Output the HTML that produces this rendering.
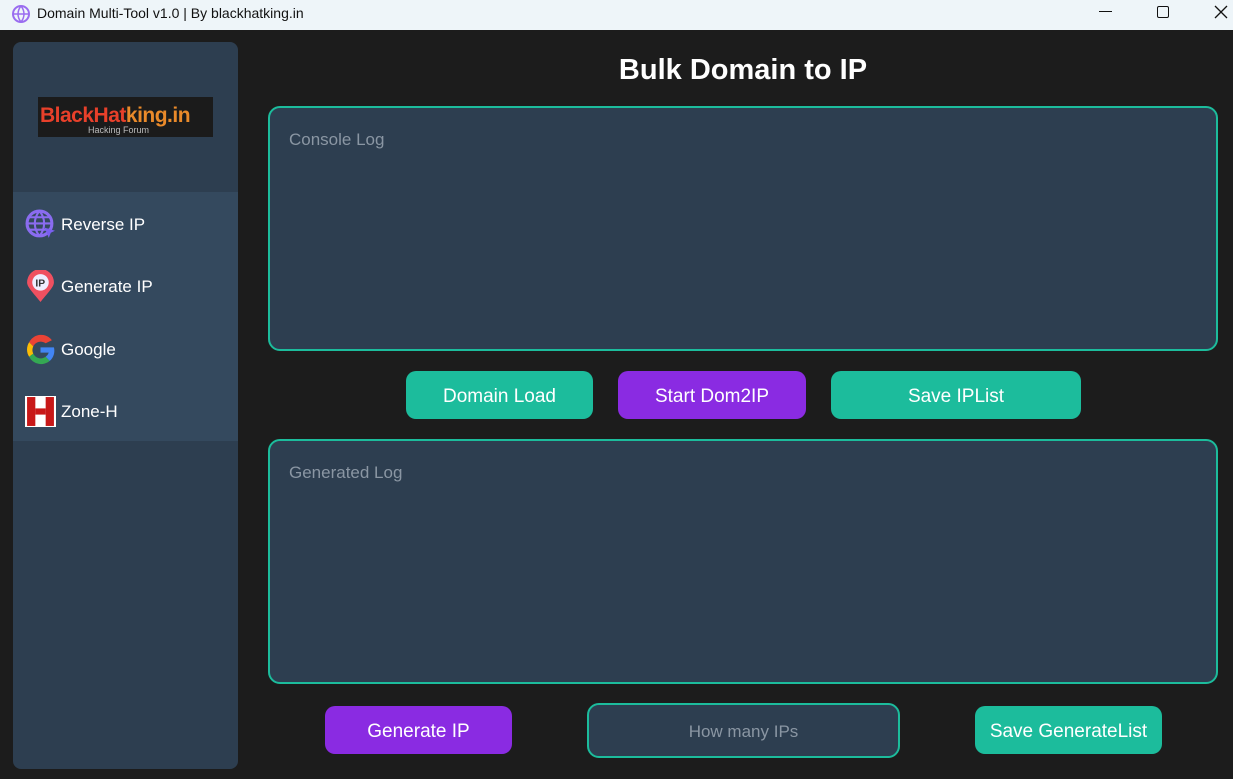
<!DOCTYPE html>
<html><head><style>
body{margin:0;width:1233px;height:779px;background:#1c1c1c;font-family:"Liberation Sans",sans-serif;position:relative;overflow:hidden}
.a{position:absolute}
.tb{left:0;top:0;width:1233px;height:30px;background:#eef5f9}
.btn{position:absolute;border-radius:10px;color:#fff;font-size:19px;display:flex;align-items:center;justify-content:center;padding-top:4px;box-sizing:border-box}
.t{background:#1cbc9c}.p{background:#8a2be2}
.box{position:absolute;border:2px solid #1cbc9c;border-radius:12px;background:#2d3e50;box-sizing:border-box}
.ph{position:absolute;left:19px;top:22px;color:#8a96a3;font-size:17px}
.nav{position:absolute;left:25px;color:#fff;font-size:17px;display:flex;align-items:center;gap:5px}
</style></head><body>
<div class="a tb"></div>
<svg class="a" style="left:11px;top:4px" width="22" height="22" viewBox="0 0 22 22"><circle cx="10" cy="10" r="8" fill="none" stroke="#9a6cf0" stroke-width="2"/><path d="M2 10h16M10 2c-4 5-4 11 0 16M10 2c4 5 4 11 0 16" fill="none" stroke="#9a6cf0" stroke-width="1.5"/></svg>
<div class="a" style="left:37px;top:5px;font-size:14px;color:#111">Domain Multi-Tool v1.0 | By blackhatking.in</div>
<div class="a" style="left:1099px;top:11px;width:13px;height:1px;background:#111"></div>
<div class="a" style="left:1157px;top:6px;width:10px;height:10px;border:1.5px solid #111;border-radius:2px"></div>
<svg class="a" style="left:1214px;top:5px" width="14" height="14"><path d="M1 1L13 13M13 1L1 13" stroke="#111" stroke-width="1.3"/></svg>
<div class="a" style="left:13px;top:42px;width:225px;height:727px;background:#2d3e50;border-radius:8px"></div>
<div class="a" style="left:38px;top:97px;width:175px;height:40px;background:#1b1b1b"></div>
<div class="a" style="left:40px;top:104px;font-size:21px;font-weight:bold;color:#e8402a;letter-spacing:-0.5px">BlackHat<span style="color:#ea8a2a">king.in</span></div>
<div class="a" style="left:88px;top:125px;font-size:9px;color:#bbb">Hacking Forum</div>
<div class="a" style="left:13px;top:192px;width:225px;height:249px;background:#34495e"></div>
<div class="nav" style="top:209px"><svg width="31" height="31" viewBox="0 0 30 30"><circle cx="14" cy="14" r="12" fill="none" stroke="#8a6cf0" stroke-width="3"/><path d="M2 14h24M14 2c-6 7-6 17 0 24M14 2c6 7 6 17 0 24M4 8h20M4 20h20" fill="none" stroke="#8a6cf0" stroke-width="2"/><path d="M19 18l10 3-4 2-2 5z" fill="#7a60f0"/></svg>Reverse IP</div>
<div class="nav" style="top:270px"><svg width="31" height="33" viewBox="0 0 30 32"><path d="M15 31C6 20 2 16 2 12a13 13 0 0126 0c0 4-4 8-13 19z" fill="#f05060"/><circle cx="15" cy="12" r="8" fill="#eef"/><text x="10" y="16" font-size="10" font-weight="bold" fill="#333" font-family="Liberation Sans">IP</text></svg>Generate IP</div>
<div class="nav" style="top:334px"><svg width="31" height="31" viewBox="0 0 30 30"><path d="M26 6A13 13 0 004 8l4 4a8 8 0 0112-3z" fill="#ea4335"/><path d="M4 8a13 13 0 000 14l4-3a8 8 0 010-7z" fill="#fbbc05"/><path d="M4 22a13 13 0 0020 4l-4-4a8 8 0 01-12-3z" fill="#34a853"/><path d="M24 26a13 13 0 004-13H15v5h8a8 8 0 01-3 4z" fill="#4285f4"/></svg>Google</div>
<div class="nav" style="top:396px"><svg width="31" height="31" viewBox="0 0 30 30"><rect width="30" height="30" fill="#fff"/><rect x="2" y="1" width="8" height="28" fill="#c81818"/><rect x="20" y="1" width="8" height="28" fill="#c81818"/><rect x="10" y="12" width="10" height="6" fill="#c81818"/></svg>Zone-H</div>
<div class="a" style="left:268px;top:54px;width:950px;text-align:center;color:#fff;font-size:29px;font-weight:bold">Bulk Domain to IP</div>
<div class="box" style="left:268px;top:106px;width:950px;height:245px"><div class="ph">Console Log</div></div>
<div class="btn t" style="left:406px;top:371px;width:187px;height:48px">Domain Load</div>
<div class="btn p" style="left:618px;top:371px;width:188px;height:48px">Start Dom2IP</div>
<div class="btn t" style="left:831px;top:371px;width:250px;height:48px">Save IPList</div>
<div class="box" style="left:268px;top:439px;width:950px;height:245px"><div class="ph">Generated Log</div></div>
<div class="btn p" style="left:325px;top:706px;width:187px;height:48px">Generate IP</div>
<div class="box" style="left:587px;top:703px;width:313px;height:55px;display:flex;align-items:center;justify-content:center;color:#8a96a3;font-size:17px;padding-top:3px">How many IPs</div>
<div class="btn t" style="left:975px;top:706px;width:187px;height:48px">Save GenerateList</div>
</body></html>
